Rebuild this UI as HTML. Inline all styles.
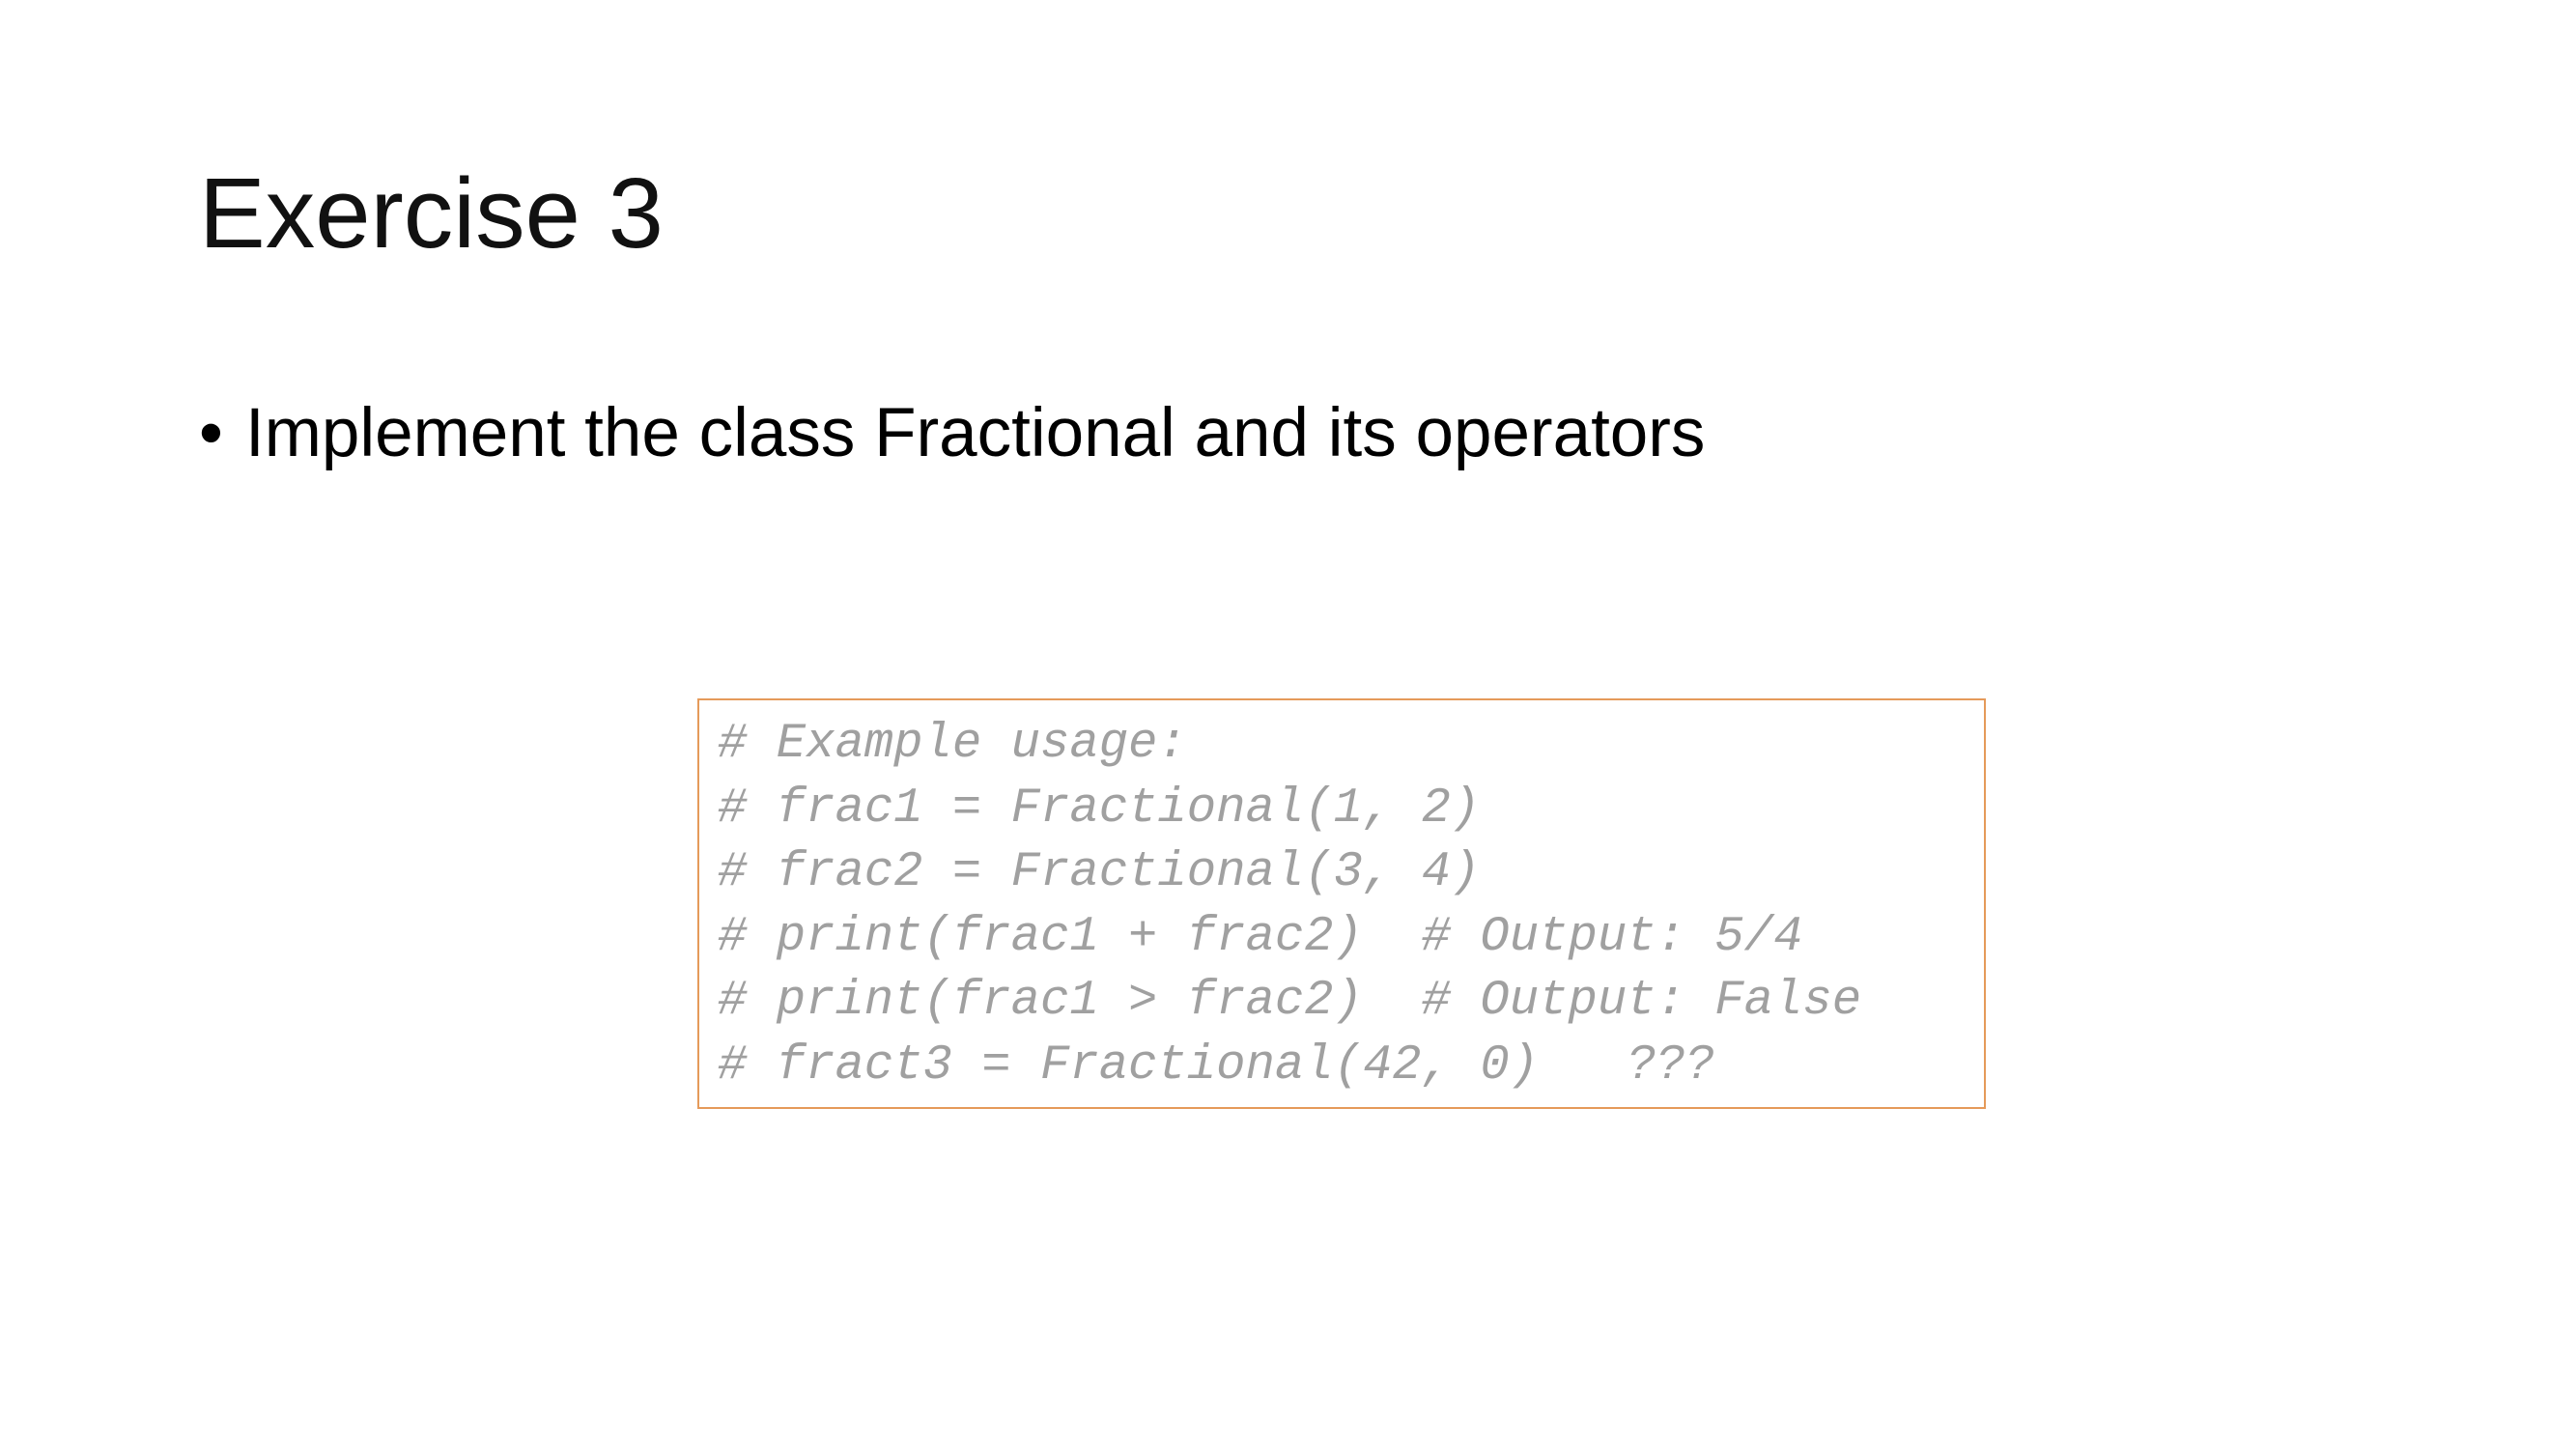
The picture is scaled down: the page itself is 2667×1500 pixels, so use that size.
<!DOCTYPE html>
<html><head><meta charset="utf-8"><style>
body{margin:0;width:2667px;height:1500px;background:#fff;position:relative;overflow:hidden;font-family:"Liberation Sans",sans-serif;}
.t{position:absolute;left:206px;top:169px;font-size:103px;line-height:1;color:#111;}
.b{position:absolute;left:206px;top:413px;font-size:71px;line-height:1;color:#000;white-space:nowrap;}
.b span{position:absolute;left:48px;}
.box{position:absolute;left:722px;top:723px;width:1330px;height:421px;border:2px solid #e59a5a;}
pre{margin:0;position:absolute;left:743px;top:738px;font-family:"Liberation Mono",monospace;font-style:italic;font-size:50.6px;line-height:66.5px;color:#a0a0a0;}
</style></head><body>
<div class="t">Exercise 3</div>
<div class="b">•<span>Implement the class Fractional and its operators</span></div>
<div class="box"></div>
<pre># Example usage:
# frac1 = Fractional(1, 2)
# frac2 = Fractional(3, 4)
# print(frac1 + frac2)  # Output: 5/4
# print(frac1 > frac2)  # Output: False
# fract3 = Fractional(42, 0)   ???</pre>
</body></html>
